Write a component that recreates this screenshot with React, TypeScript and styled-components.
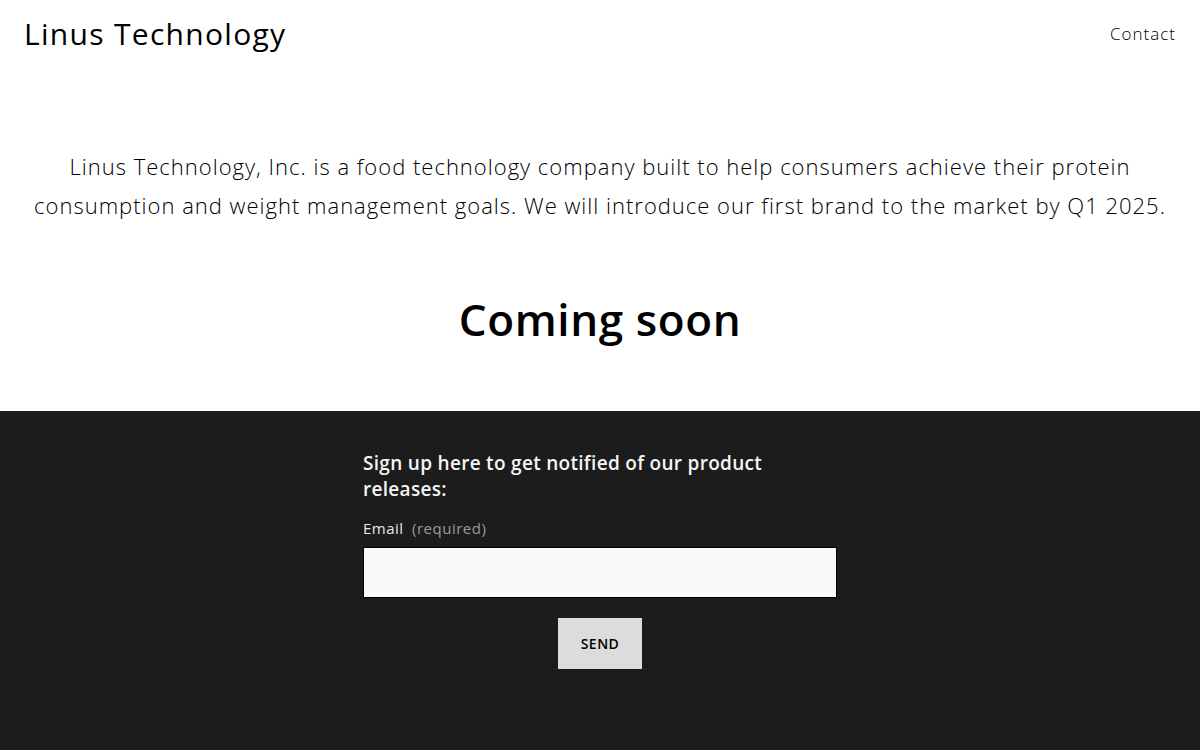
import styled, { createGlobalStyle } from "styled-components";

const GlobalStyle = createGlobalStyle`
  html, body {
    margin: 0;
    padding: 0;
    background: #ffffff;
  }
  body {
    font-family: "Open Sans", "DejaVu Sans", sans-serif;
    color: #000;
  }
`;

const App = () => {
  return (
    <>
      <GlobalStyle />
      <Page>
        <Header>
          <Brand>Linus Technology</Brand>
          <NavLink href="#">Contact</NavLink>
        </Header>

        <Intro>
          <Lead>
            Linus Technology, Inc. is a food technology company built to help consumers achieve their
            protein consumption and weight management goals. We will introduce our first brand to the
            market by Q1 2025.
          </Lead>
          <Title>Coming soon</Title>
        </Intro>

        <Footer>
          <Form onSubmit={(e) => e.preventDefault()}>
            <FormHeading>Sign up here to get notified of our product releases:</FormHeading>
            <Label htmlFor="email">
              Email <Required>(required)</Required>
            </Label>
            <Input id="email" type="email" />
            <Actions>
              <SendButton type="submit">Send</SendButton>
            </Actions>
          </Form>
        </Footer>
      </Page>
    </>
  );
};

const Page = styled.div`
  display: flex;
  flex-direction: column;
  min-height: 750px;
`;

const Header = styled.header`
  display: flex;
  align-items: center;
  justify-content: space-between;
  padding: 13px 24px 0 24px;
  height: 40px;
`;

const Brand = styled.h1`
  margin: 0;
  font-size: 30px;
  font-weight: 500;
  letter-spacing: 1.3px;
  color: #000;
`;

const NavLink = styled.a`
  font-size: 17px;
  font-weight: 300;
  letter-spacing: 1px;
  color: #000;
  text-decoration: none;
`;

const Intro = styled.section`
  display: flex;
  flex-direction: column;
  align-items: center;
  padding: 94px 24px 0;
  height: 264px;
`;

const Lead = styled.p`
  margin: 0;
  text-align: center;
  font-size: 22px;
  font-weight: 300;
  letter-spacing: 1px;
  line-height: 39px;
  max-width: 1145px;
`;

const Title = styled.h2`
  margin: 68px 0 0;
  font-size: 44px;
  font-weight: 600;
  letter-spacing: 0.6px;
  line-height: 1.2;
`;

const Footer = styled.footer`
  flex: 1;
  background: #1c1c1c;
  display: flex;
  justify-content: center;
  padding-top: 39px;
`;

const Form = styled.form`
  width: 474px;
  display: flex;
  flex-direction: column;
`;

const FormHeading = styled.p`
  margin: 0;
  color: #f5f5f5;
  font-size: 19px;
  font-weight: 600;
  letter-spacing: 0.3px;
  line-height: 26px;
`;

const Label = styled.label`
  margin-top: 15px;
  color: #e8e8e8;
  font-size: 15px;
  font-weight: 400;
  letter-spacing: 0.5px;
  line-height: 22px;
`;

const Required = styled.span`
  color: #9a9a9a;
  margin-left: 4px;
`;

const Input = styled.input`
  margin-top: 8px;
  height: 51px;
  box-sizing: border-box;
  background: #fafafa;
  border: 1px solid #000;
  outline: none;
  padding: 0 12px;
  font-size: 16px;
`;

const Actions = styled.div`
  display: flex;
  justify-content: center;
  margin-top: 20px;
`;

const SendButton = styled.button`
  width: 84px;
  height: 51px;
  border: none;
  background: #dcdcdc;
  color: #000;
  font-family: inherit;
  font-size: 14px;
  font-weight: 600;
  text-transform: uppercase;
  letter-spacing: 0.5px;
  cursor: pointer;
`;

export default App;
